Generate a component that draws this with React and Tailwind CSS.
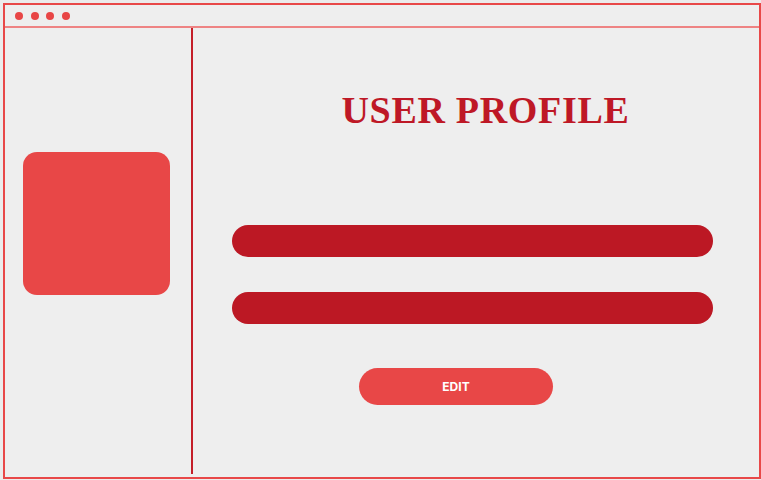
export default function App() {
  return (
    <div className="w-[761px] h-[480px] bg-[#ebebeb] pt-[3px] pl-[3px]">
      <div className="w-[758px] h-[476px] border-2 border-[#e84848] bg-[#eeeeee] flex flex-col">
        {/* window header */}
        <div className="h-[23px] shrink-0 border-b-2 border-[#ee8383] flex items-center pl-[10px] gap-[7.5px]">
          <span className="w-[8px] h-[8px] rounded-full bg-[#e84646]"></span>
          <span className="w-[8px] h-[8px] rounded-full bg-[#e84646]"></span>
          <span className="w-[8px] h-[8px] rounded-full bg-[#e84646]"></span>
          <span className="w-[8px] h-[8px] rounded-full bg-[#e84646]"></span>
        </div>

        <div className="flex flex-1 min-h-0">
          {/* sidebar */}
          <div className="w-[188px] shrink-0 border-r-2 border-[#c41e28] mb-[3px] pt-[124px] pl-[18px]">
            <div className="w-[147px] h-[143px] rounded-[14px] bg-[#e84747]"></div>
          </div>

          {/* main */}
          <div className="flex-1 flex flex-col pt-[63px]">
            <div className="flex justify-center pl-[19px]">
              <h1
                className="text-[38px] leading-none font-bold text-[#be1826] tracking-[0.7px]"
                style={{ fontFamily: '"Liberation Serif", "DejaVu Serif", serif' }}
              >
                USER PROFILE
              </h1>
            </div>

            <div className="ml-[39px] mt-[96px] w-[481px] h-[32px] rounded-full bg-[#bc1824]"></div>
            <div className="ml-[39px] mt-[35px] w-[481px] h-[32px] rounded-full bg-[#bc1824]"></div>

            <button className="ml-[166px] mt-[44px] w-[194px] h-[37px] rounded-full bg-[#e84747] text-white text-[12px] font-bold font-['Inter',sans-serif]">
              EDIT
            </button>
          </div>
        </div>
      </div>
    </div>
  );
}
